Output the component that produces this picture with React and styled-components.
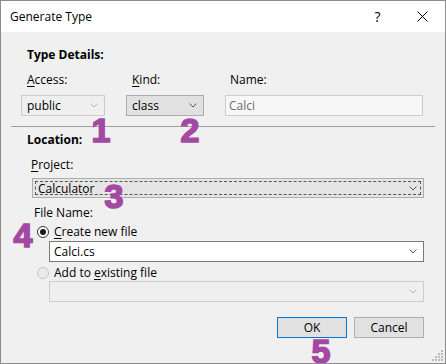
import styled, { createGlobalStyle } from 'styled-components';

const Global = createGlobalStyle`
  html, body {
    margin: 0;
    padding: 0;
    background: #ffffff;
  }
  * {
    box-sizing: border-box;
  }
`;

const Window = styled.div`
  position: relative;
  width: 446px;
  height: 364px;
  border: 1px solid #8c8c8c;
  background: #f0f0f0;
  font-family: "Open Sans", "Noto Sans", sans-serif;
  font-size: 12px;
  color: #000;
  display: flex;
  flex-direction: column;
  overflow: hidden;
`;

const TitleBar = styled.div`
  height: 31px;
  background: #ffffff;
  display: flex;
  align-items: center;
  padding-left: 9px;
`;

const Title = styled.div`
  flex: 1;
  font-size: 12px;
`;

const TitleButton = styled.div`
  width: 45px;
  height: 31px;
  display: flex;
  align-items: center;
  justify-content: center;
  font-size: 14px;
`;

const Body = styled.div`
  flex: 1;
  display: flex;
  flex-direction: column;
  padding: 0 10px;
`;

const Heading = styled.div`
  font-weight: 700;
  line-height: 16px;
  margin: ${(p) => p.$top}px 0 0 16px;
`;

const Label = styled.div`
  line-height: 16px;
  margin: ${(p) => p.$top}px 0 0 ${(p) => p.$left}px;
`;

const Key = styled.span`
  text-decoration: underline;
  text-underline-offset: 2px;
`;

const DetailsGrid = styled.div`
  display: grid;
  grid-template-columns: 84px 78px 198px;
  column-gap: 21px;
  row-gap: 7px;
  margin: 9px 0 0 10px;
`;

const FieldLabel = styled.div`
  line-height: 16px;
  padding-left: ${(p) => p.$pad}px;
`;

const Combo = styled.div`
  height: ${(p) => p.$h || 21}px;
  width: ${(p) => (p.$w ? `${p.$w}px` : 'auto')};
  display: flex;
  align-items: center;
  justify-content: space-between;
  padding: 0 6px 0 ${(p) => p.$padLeft || 5}px;
  border: 1px solid ${(p) => p.$border};
  background: ${(p) => p.$bg};
  color: ${(p) => p.$color || '#000'};
  margin: ${(p) => p.$margin || '0'};
  position: relative;
`;

const FocusRing = styled.div`
  position: absolute;
  inset: 2px;
  border: 1px dashed #555;
  pointer-events: none;
`;

const Separator = styled.div`
  height: 1px;
  background: #a0a0a0;
  margin-top: 10px;
`;

const RadioRow = styled.div`
  display: flex;
  align-items: center;
  gap: 5px;
  line-height: 16px;
  margin: ${(p) => p.$top}px 0 0 26px;
  color: #000;
`;

const RadioDot = styled.div`
  width: 12px;
  height: 12px;
  border-radius: 50%;
  border: 1px solid ${(p) => (p.$disabled ? '#c4c4c4' : '#333')};
  background: ${(p) => (p.$disabled ? '#eaeaea' : '#fff')};
  display: flex;
  align-items: center;
  justify-content: center;

  &::after {
    content: '';
    display: ${(p) => (p.$checked ? 'block' : 'none')};
    width: 6px;
    height: 6px;
    border-radius: 50%;
    background: #1a1a1a;
  }
`;

const ButtonRow = styled.div`
  display: flex;
  justify-content: flex-end;
  gap: 7px;
  margin-top: 15px;
  padding-right: 11px;
`;

const Button = styled.div`
  width: 70px;
  height: 21px;
  display: flex;
  align-items: center;
  justify-content: center;
  background: #e1e1e1;
  border: 1px solid ${(p) => (p.$default ? '#0078d7' : '#adadad')};
`;

const Grip = styled.svg`
  position: absolute;
  right: 2px;
  bottom: 2px;
`;

/* purple callout numbers drawn over the dialog */
const Mark = styled.div`
  position: absolute;
  left: ${(p) => p.$x - 20}px;
  top: ${(p) => p.$y - 5}px;
  width: 40px;
  text-align: center;
  font-family: "Liberation Sans", Arial, sans-serif;
  font-weight: 700;
  font-size: 34px;
  line-height: 34px;
  color: #a349a4;
  -webkit-text-stroke: 1.6px #a349a4;
`;

function Chevron({ color = '#555' }) {
  return (
    <svg width="8" height="5" viewBox="0 0 8 5">
      <path d="M0.5 0.5 L4 4 L7.5 0.5" fill="none" stroke={color} strokeWidth="1" />
    </svg>
  );
}

function CloseIcon() {
  return (
    <svg width="11" height="11" viewBox="0 0 11 11">
      <path d="M0.5 0.5 L10.5 10.5 M10.5 0.5 L0.5 10.5" stroke="#000" strokeWidth="1" />
    </svg>
  );
}

function SizeGrip() {
  const dots = [
    [9, 0], [6, 3], [9, 3], [3, 6], [6, 6], [9, 6], [0, 9], [3, 9], [6, 9], [9, 9],
  ];
  return (
    <Grip width="11" height="11" viewBox="0 0 11 11">
      {dots.map(([x, y]) => (
        <rect key={`${x}-${y}`} x={x} y={y} width="2" height="2" fill="#bcbcbc" />
      ))}
    </Grip>
  );
}

export default function App() {
  return (
    <>
      <Global />
      <Window>
        <TitleBar>
          <Title>Generate Type</Title>
          <TitleButton>?</TitleButton>
          <TitleButton>
            <CloseIcon />
          </TitleButton>
        </TitleBar>
        <Body>
          <Heading $top={15}>Type Details:</Heading>
          <DetailsGrid>
            <FieldLabel $pad={6}>
              <Key>A</Key>ccess:
            </FieldLabel>
            <FieldLabel $pad={6}>
              <Key>K</Key>ind:
            </FieldLabel>
            <FieldLabel $pad={5}>Name:</FieldLabel>
            <Combo $border="#cccccc" $bg="#efefef">
              public
              <Chevron color="#b5b5b5" />
            </Combo>
            <Combo $border="#adadad" $bg="#e1e1e1">
              class
              <Chevron />
            </Combo>
            <Combo $border="#cccccc" $bg="#f7f7f7" $color="#6d6d6d" $padLeft={3}>
              Calci
            </Combo>
          </DetailsGrid>
          <Separator />
          <Heading $top={5}>Location:</Heading>
          <Label $top={9} $left={20}>
            <Key>P</Key>roject:
          </Label>
          <Combo $h={20} $w={392} $border="#adadad" $bg="#e5e5e5" $margin="5px 0 0 21px" $padLeft={5}>
            <FocusRing />
            Calculator
            <Chevron />
          </Combo>
          <Label $top={7} $left={23}>File Name:</Label>
          <RadioRow $top={3}>
            <RadioDot $checked />
            <span>
              <Key>C</Key>reate new file
            </span>
          </RadioRow>
          <Combo $w={375} $border="#7a7a7a" $bg="#ffffff" $margin="1px 0 0 38px" $padLeft={4}>
            Calci.cs
            <Chevron />
          </Combo>
          <RadioRow $top={3}>
            <RadioDot $disabled />
            <span>
              Add to <Key>e</Key>xisting file
            </span>
          </RadioRow>
          <Combo $w={375} $border="#cccccc" $bg="#efefef" $margin="0 0 0 38px">
            <span />
            <Chevron color="#b5b5b5" />
          </Combo>
          <ButtonRow>
            <Button $default>OK</Button>
            <Button>Cancel</Button>
          </ButtonRow>
        </Body>
        <SizeGrip />
        <Mark $x={100} $y={117}>1</Mark>
        <Mark $x={189} $y={117}>2</Mark>
        <Mark $x={113} $y={183}>3</Mark>
        <Mark $x={22} $y={222}>4</Mark>
        <Mark $x={320} $y={338}>5</Mark>
      </Window>
    </>
  );
}
